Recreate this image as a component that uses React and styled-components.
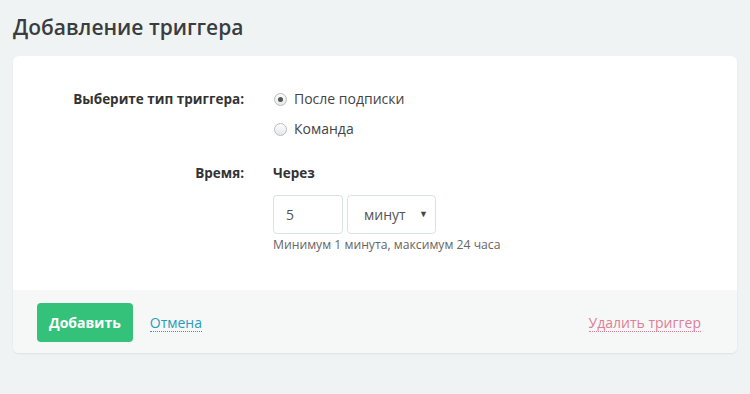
import React, { useState } from 'react';
import styled, { createGlobalStyle } from 'styled-components';

const GlobalStyle = createGlobalStyle`
  html, body {
    margin: 0;
    padding: 0;
    background: #f0f3f4;
    font-family: "Open Sans", "Noto Sans", sans-serif;
    color: #333;
  }
`;

const Page = styled.div`
  padding: 14px 13px 40px;
`;

const Title = styled.h1`
  margin: 0 0 15px;
  font-size: 21px;
  font-weight: 600;
  line-height: 27px;
  color: #3a3d40;
`;

const Card = styled.div`
  background: #fff;
  border-radius: 6px;
  box-shadow: 0 1px 2px rgba(0, 0, 0, 0.08);
  overflow: hidden;
`;

const Body = styled.div`
  padding: 30px 0 37px;
  display: grid;
  grid-template-columns: 231px 1fr;
  column-gap: 29px;
  row-gap: 18px;
`;

const Label = styled.div`
  text-align: right;
  font-size: 13.5px;
  font-weight: 700;
  color: #333;
  line-height: 26px;
`;

const Field = styled.div`
  display: flex;
  flex-direction: column;
  gap: ${(p) => p.$gap || 4}px;
`;

const RadioRow = styled.label`
  display: flex;
  align-items: center;
  gap: 7px;
  font-size: 14px;
  color: #444;
  line-height: 26px;
  cursor: pointer;
`;

const RadioDot = styled.span`
  width: 11px;
  height: 11px;
  border-radius: 50%;
  border: 1px solid #b9bcbe;
  background: linear-gradient(#fdfdfd, #e6e7e8);
  display: flex;
  align-items: center;
  justify-content: center;
  margin-left: 1px;

  &::after {
    content: '';
    width: 5px;
    height: 5px;
    border-radius: 50%;
    background: ${(p) => (p.$checked ? '#555' : 'transparent')};
  }
`;

const SubLabel = styled.div`
  font-size: 13.5px;
  font-weight: 700;
  color: #333;
  line-height: 26px;
`;

const Controls = styled.div`
  display: flex;
  gap: 4px;
  margin-top: 5px;
`;

const NumberInput = styled.input`
  box-sizing: border-box;
  width: 70px;
  height: 39px;
  border: 1px solid #d6e5e2;
  border-radius: 4px;
  padding: 0 12px;
  font-family: inherit;
  font-size: 14px;
  color: #555;
  outline: none;
`;

const SelectBox = styled.div`
  box-sizing: border-box;
  width: 89px;
  height: 39px;
  border: 1px solid #d6e5e2;
  border-radius: 4px;
  display: flex;
  align-items: center;
  justify-content: space-between;
  padding: 0 7px 0 16px;
  font-size: 14px;
  color: #555;
`;

const Caret = styled.span`
  font-size: 9px;
  color: #444;
  margin-top: -2px;
`;

const Hint = styled.div`
  font-size: 12.2px;
  color: #666;
  margin-top: -2px;
`;

const Footer = styled.div`
  background: #f6f8f8;
  padding: 13px 36px 11px 24px;
  display: flex;
  align-items: center;
  gap: 17px;
`;

const PrimaryButton = styled.button`
  height: 39px;
  padding: 0 12px;
  border: none;
  border-radius: 4px;
  background: #34c27a;
  color: #fff;
  font-family: inherit;
  font-size: 14px;
  font-weight: 700;
  cursor: pointer;
`;

const TextLink = styled.a`
  font-size: 14px;
  color: ${(p) => p.$color};
  text-decoration: none;
  border-bottom: 1px dotted ${(p) => p.$color};
  line-height: 17px;
  margin-left: ${(p) => (p.$push ? 'auto' : '0')};
  cursor: pointer;
`;

export default function App() {
  const [type, setType] = useState('sub');
  const [amount, setAmount] = useState('5');

  return (
    <>
      <GlobalStyle />
      <Page>
        <Title>Добавление триггера</Title>
        <Card>
          <Body>
            <Label>Выберите тип триггера:</Label>
            <Field $gap={4}>
              <RadioRow onClick={() => setType('sub')}>
                <RadioDot $checked={type === 'sub'} />
                После подписки
              </RadioRow>
              <RadioRow onClick={() => setType('cmd')}>
                <RadioDot $checked={type === 'cmd'} />
                Команда
              </RadioRow>
            </Field>

            <Label>Время:</Label>
            <Field $gap={0}>
              <SubLabel>Через</SubLabel>
              <Controls>
                <NumberInput value={amount} onChange={(e) => setAmount(e.target.value)} />
                <SelectBox>
                  минут
                  <Caret>▼</Caret>
                </SelectBox>
              </Controls>
              <Hint>Минимум 1 минута, максимум 24 часа</Hint>
            </Field>
          </Body>
          <Footer>
            <PrimaryButton>Добавить</PrimaryButton>
            <TextLink $color="#2a9bb7">Отмена</TextLink>
            <TextLink $color="#e07e96" $push>Удалить триггер</TextLink>
          </Footer>
        </Card>
      </Page>
    </>
  );
}
